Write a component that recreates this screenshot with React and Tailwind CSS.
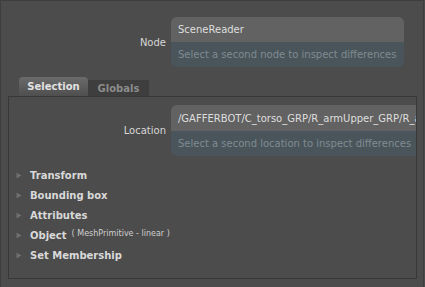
import React from 'react';

const font = { fontFamily: '"DejaVu Sans", Verdana, sans-serif' };

const Section = ({ label, note }) => (
  <div className="flex items-center h-[20px] pl-[7px]">
    <svg width="6" height="7" viewBox="0 0 6 7" className="shrink-0">
      <path d="M0.5 0.5 L5.5 3.5 L0.5 6.5 Z" fill="#6f6f6f" />
    </svg>
    <span className="ml-[8px] text-[10px] font-bold text-[#d9d9d9]">{label}</span>
    {note && (
      <span className="ml-[5px] text-[8px] text-[#cfcfcf] -mt-[3px]">{note}</span>
    )}
  </div>
);

const DiffField = ({ value, hint, width, topH, bottomH }) => (
  <div className={`${width} rounded-[6px] overflow-hidden shrink-0`}>
    <div className={`${topH} bg-[#626262] flex items-center pl-[7px] text-[10px] text-[#dedede] whitespace-nowrap overflow-hidden`}>
      {value}
    </div>
    <div className={`${bottomH} bg-[#4a555b] flex items-center pl-[7px] text-[10px] text-[#7f8b91] whitespace-nowrap overflow-hidden`}>
      {hint}
    </div>
  </div>
);

export default function App() {
  return (
    <div style={font} className="w-[425px] h-[287px] bg-[#4c4c4c] overflow-hidden flex">
      <div className="w-[424px] h-full border-t border-l border-r border-[#3e3e3e] flex flex-col shrink-0">
        {/* Node row */}
        <div className="flex items-center mt-[16px]">
          <div className="w-[165px] shrink-0 text-right text-[10px] text-[#d6d6d6]">Node</div>
          <div className="ml-[5px] shrink-0">
            <DiffField
              value="SceneReader"
              hint="Select a second node to inspect differences"
              width="w-[233px]"
              topH="h-[25px]"
              bottomH="h-[25px]"
            />
          </div>
        </div>

        {/* Tabs */}
        <div className="flex items-end mt-[10px] ml-[18px] h-[19px]">
          <div className="h-[19px] w-[69px] rounded-t-[4px] bg-gradient-to-b from-[#6b6b6b] to-[#4e4e4e] flex items-center justify-center text-[10px] font-bold text-[#e2e2e2]">
            Selection
          </div>
          <div className="h-[16px] w-[61px] bg-[#3e3e3e] flex items-center justify-center text-[10px] font-bold text-[#8c8c8c]">
            Globals
          </div>
        </div>

        {/* Panel */}
        <div className="ml-[7px] w-[409px] h-[183px] border border-[#383838] overflow-hidden">
          <div className="flex items-center mt-[8px]">
            <div className="w-[157px] shrink-0 text-right text-[10px] text-[#d6d6d6]">Location</div>
            <div className="ml-[5px] shrink-0">
              <DiffField
                value="/GAFFERBOT/C_torso_GRP/R_armUpper_GRP/R_a"
                hint="Select a second location to inspect differences"
                width="w-[260px]"
                topH="h-[26px]"
                bottomH="h-[25px]"
              />
            </div>
          </div>
          <div className="mt-[9px] flex flex-col">
            <Section label="Transform" />
            <Section label="Bounding box" />
            <Section label="Attributes" />
            <Section label="Object" note="( MeshPrimitive - linear )" />
            <Section label="Set Membership" />
          </div>
        </div>
      </div>
    </div>
  );
}
